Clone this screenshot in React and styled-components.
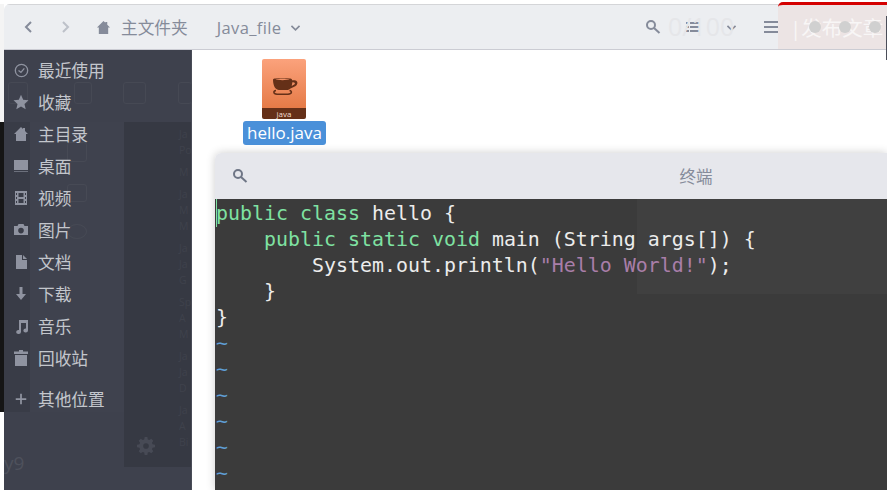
import React from 'react'
import styled, { createGlobalStyle } from 'styled-components'

const Global = createGlobalStyle`
html, body { margin:0; padding:0; background:#fff; overflow:hidden; }
`

const UI_FONT = `"Open Sans","Noto Sans","Noto Sans CJK SC",sans-serif`

const Desktop = styled.div`
position:relative;
width:887px;
height:490px;
overflow:hidden;
background:#fff;
font-family:${UI_FONT};
`
/* what shows through at the left of the file window */
const BackDark = styled.div`
position:absolute;
left:0;
top:122px;
width:4px;
height:290px;
background:#151515;
`
const BackGrey = styled.div`
position:absolute;
left:0;
top:4px;
width:4px;
height:118px;
background:#f4f4f4;
`
const FileWindow = styled.div`
position:absolute;
left:4px;
top:4px;
width:883px;
height:486px;
display:flex;
flex-direction:column;
border-radius:6px 6px 0 0;
overflow:hidden;
`
const HeaderBar = styled.div`
position:relative;
height:44px;
flex:none;
display:flex;
align-items:center;
background:#eceef1;
border-top:1px solid #d4d5d8;
border-bottom:1px solid #cbccd3;
color:#858b9a;
`
const NavBtn = styled.span`
display:flex;
width:${p => p.$w}px;
margin-left:${p => p.$ml || 0}px;
justify-content:center;
align-items:center;
opacity:${p => (p.$dim ? 0.45 : 1)};
`
const Crumb = styled.span`
display:flex;
align-items:center;
gap:${p => p.$gap}px;
font-size:${p => p.$size}px;
letter-spacing:${p => p.$track || 0}px;
margin-left:${p => p.$ml}px;
color:#858b9a;
`
const HeaderRight = styled.div`
position:relative;
margin-left:auto;
padding-right:108px;
display:flex;
align-items:center;
height:100%;
`
const CountGhost = styled.span`
position:absolute;
left:23px;
top:4px;
font-size:25px;
line-height:34px;
color:#e5e6e9;
`
const PublishGhost = styled.div`
position:absolute;
left:778px;
top:2px;
width:109px;
height:47px;
box-sizing:border-box;
background:#ece4e4;
border-top:3px solid #d40000;
border-radius:5px 0 0 0;
display:flex;
align-items:center;
padding-left:12px;
font-size:20.5px;
color:#f8f6f6;
white-space:nowrap;
`
const Dots = styled.div`
position:absolute;
left:31px;
top:16px;
display:flex;
gap:18px;
`
const Dot = styled.span`
width:12px;
height:12px;
border-radius:50%;
background:#d0d0d0;
`
const EdgeMark = styled.div`
position:absolute;
right:0;
top:16px;
width:1px;
height:44px;
background:#4b4e59;
`
const Body = styled.div`
flex:1;
display:flex;
min-height:0;
`
const Sidebar = styled.nav`
position:relative;
width:188px;
flex:none;
background:#3e414d;
border-right:1px solid #4a4d58;
box-sizing:border-box;
padding-top:4px;
display:flex;
flex-direction:column;
color:#c3c6cc;
`
const ShadeLeft = styled.div`
position:absolute;
left:0;
top:72px;
width:26px;
height:290px;
background:#393c47;
`
const ShadeStrip = styled.div`
position:absolute;
left:26px;
top:72px;
width:94px;
height:290px;
background:#3f424e;
color:#474a55;
display:flex;
flex-direction:column;
align-items:center;
gap:22px;
padding-top:20px;
box-sizing:border-box;
`
const ShadeRight = styled.div`
position:absolute;
left:120px;
top:72px;
right:0;
height:345px;
background:#363943;
color:#3f424c;
font-size:10.5px;
padding:4px 0 0 55px;
box-sizing:border-box;
display:flex;
flex-direction:column;
overflow:hidden;
`
const GhostLine = styled.span`
flex:none;
line-height:16px;
white-space:nowrap;
margin-top:${p => p.$gap || 0}px;
`
const Gear = styled.span`
position:absolute;
left:133px;
top:387px;
color:#474a55;
display:flex;
`
const GhostTiles = styled.div`
position:absolute;
left:0;
top:32px;
display:flex;
color:#464954;
`
const Tile = styled.span`
width:${p => p.$w || 20}px;
height:${p => p.$h || 20}px;
margin-left:${p => p.$ml || 0}px;
border:1px solid currentColor;
border-radius:${p => (p.$round ? '50%' : '3px')};
box-sizing:border-box;
`
const NavRow = styled.div`
position:relative;
height:32px;
display:flex;
align-items:center;
font-size:16.7px;
margin-top:${p => p.$gap || 0}px;
`
const NavIcon = styled.span`
width:34px;
flex:none;
display:flex;
justify-content:center;
color:#8f93a0;
`
const GhostLetters = styled.div`
position:absolute;
left:0;
bottom:14px;
font-size:19px;
color:#4e515c;
`
const Content = styled.main`
flex:1;
background:#fff;
padding:9px 0 0 51px;
`
const FileItem = styled.div`
display:inline-flex;
flex-direction:column;
align-items:center;
gap:2px;
`
const Label = styled.span`
background:#4a90d9;
color:#fff;
border-radius:3px;
padding:0 4px;
font-size:17px;
line-height:24px;
height:24px;
`
const Terminal = styled.section`
position:absolute;
left:215px;
top:153px;
width:672px;
height:337px;
display:flex;
flex-direction:column;
border-radius:6px 0 0 0;
box-shadow:0 0 10px rgba(0,0,0,.2);
overflow:hidden;
`
const TitleBar = styled.div`
position:relative;
height:46px;
flex:none;
background:#e6e7ec;
display:flex;
align-items:center;
justify-content:center;
color:#858b9a;
font-size:16.5px;
padding-left:290px;
box-sizing:border-box;
`
const SearchBtn = styled.span`
position:absolute;
left:17px;
top:15px;
display:flex;
color:#6f7686;
`
const Screen = styled.pre`
position:relative;
flex:1;
margin:0;
background:#3b3b3b;
color:#ececec;
padding:2px 0 0 1px;
font-family:"DejaVu Sans Mono","Liberation Mono",monospace;
font-size:19.93px;
line-height:26px;
`
const GhostArea = styled.div`
position:absolute;
left:422px;
top:0;
right:0;
height:95px;
background:#404040;
`
const Line = styled.div`
position:relative;
height:26px;
white-space:pre;
`
const Kw = styled.span`
color:#7fe2a2;
`
const Str = styled.span`
color:#a97ea9;
`
const Tilde = styled(Line)`
color:#5f9fd6;
`
const Cursor = styled.i`
position:absolute;
left:0;
top:-2px;
width:1px;
height:28px;
background:#7fe2a2;
`

const Chevron = ({ dir = 'left', size = 16 }) => {
  const d = { left: 'M10 3 5 8l5 5', right: 'M6 3l5 5-5 5', down: 'M3 6l5 5 5-5' }[dir]
  return (
    <svg width={size} height={size} viewBox="0 0 16 16" fill="none" stroke="currentColor" strokeWidth="2">
      <path d={d} />
    </svg>
  )
}
const Glyph = ({ size = 16, children, stroke }) => (
  <svg
    width={size}
    height={size}
    viewBox="0 0 16 16"
    fill={stroke ? 'none' : 'currentColor'}
    stroke={stroke ? 'currentColor' : 'none'}
    strokeWidth={stroke || 0}
  >
    {children}
  </svg>
)
const HomeIcon = ({ size }) => (
  <Glyph size={size}>
    <path d="M8 1 1 8h2v7h10V8h2l-3-3V2h-2v1z" />
  </Glyph>
)
const SearchIcon = () => (
  <Glyph size={16} stroke={2}>
    <circle cx="6" cy="6" r="4" />
    <path d="M9 9l5.500 5" />
  </Glyph>
)
const icons = {
  clock: (
    <Glyph size={15} stroke={1.4}>
      <circle cx="8" cy="8" r="6.600" />
      <path d="M4.800 8 7.400 10 11 5.800" />
    </Glyph>
  ),
  star: (
    <Glyph>
      <path d="M8 .8l2.200 5 5.300.5-4 3.600 1.200 5.300L8 12.400l-4.700 2.800 1.200-5.300-4-3.600 5.300-.5z" />
    </Glyph>
  ),
  home: <HomeIcon size={16} />,
  desk: (
    <Glyph>
      <path d="M1 2h14v10H1z" />
      <path d="M1 13h14v1H1z" opacity=".6" />
    </Glyph>
  ),
  film: (
    <Glyph>
      <path fillRule="evenodd" d="M2 1h12v14H2zM3 3v2h1V3zm0 4v2h1V7zm0 4v2h1v-2zm9-8v2h1V3zm0 4v2h1V7zm0 4v2h1v-2zM5.500 3v4h5V3zm0 6v4h5V9z" />
    </Glyph>
  ),
  camera: (
    <Glyph>
      <path fillRule="evenodd" d="M1 4h3.500l1-2h5l1 2H15v9H1zm7 1.800a2.800 2.800 0 1 0 0 5.600 2.800 2.800 0 0 0 0-5.600z" />
    </Glyph>
  ),
  doc: (
    <Glyph>
      <path d="M3 1h6v5h5v9H3zM10 1l4 4h-4z" />
    </Glyph>
  ),
  down: (
    <Glyph>
      <path d="M6.500 1h3v7H13l-5 6-5-6h3.500z" />
    </Glyph>
  ),
  music: (
    <Glyph>
      <path d="M6 2h9v10.500a2.300 2 0 1 1-2-2V5H8v9a2.400 2 0 1 1-2-2z" />
    </Glyph>
  ),
  trash: (
    <Glyph>
      <path d="M6 0h4v1.500h5V4H1V1.500h5zM2 5h12v11H2z" />
    </Glyph>
  ),
  plus: (
    <Glyph size={14} stroke={2}>
      <path d="M8 2v12M2 8h12" />
    </Glyph>
  ),
}

const places = [
  ['clock', '最近使用'],
  ['star', '收藏'],
  ['home', '主目录'],
  ['desk', '桌面'],
  ['film', '视频'],
  ['camera', '图片'],
  ['doc', '文档'],
  ['down', '下载'],
  ['music', '音乐'],
  ['trash', '回收站'],
]

// faint list of the window behind, groups of three lines
const ghostGroups = [
  ['Ja', 'Po'],
  ['M'],
  ['Ja', 'M', 'M'],
  ['Ja', 'Ja', 'G'],
  ['Sp', 'A', 'M'],
  ['Ja', 'Ja', 'D'],
  ['Ja', 'A', 'Bi'],
]

const JavaIcon = () => (
  <svg width="44" height="60" viewBox="0 0 44 60">
    <defs>
      <linearGradient id="jv" x1="0" y1="0" x2="0" y2="1">
        <stop offset="0" stopColor="#fba27c" />
        <stop offset="1" stopColor="#e57a46" />
      </linearGradient>
    </defs>
    <path d="M2 0h40a2 2 0 0 1 2 2v48H0V2a2 2 0 0 1 2-2z" fill="url(#jv)" />
    <path d="M0 49h44v9a2 2 0 0 1-2 2H2a2 2 0 0 1-2-2z" fill="#653018" />
    <path
      fill="#653018"
      fillRule="evenodd"
      d="M11 20.500c0-2 19-2 19 0v.7h2.500c3.500 0 4 4.300.8 6l-4.800 2.300c-1 .8-2 1.500-3.500 1.500h-8c-3 0-6-3.500-6-10.500zm2.500-.2c2 1.100 12 1.100 14 0-2-1-12-1-14 0zm16.900 3-.7 3.600 2.500-1.300c1.300-.8 1-2.500-1.800-2.300z"
    />
    <path
      fill="none"
      stroke="#653018"
      strokeWidth="1.500"
      d="M14 31.500c-3 .5-3 3.500 1 3.700h11c4-.2 4.500-3.200 1.500-3.700"
    />
    <text x="22" y="57.500" textAnchor="middle" fontSize="8" fontFamily="Open Sans, sans-serif" fill="#f1ddd2">
      java
    </text>
  </svg>
)

function App() {
  return (
    <>
      <Global />
      <Desktop>
        <BackGrey />
        <BackDark />
        <FileWindow>
          <HeaderBar>
            <NavBtn $w={22} $ml={14}>
              <Chevron dir="left" />
            </NavBtn>
            <NavBtn $w={22} $ml={14} $dim>
              <Chevron dir="right" />
            </NavBtn>
            <Crumb $ml={20} $gap={10} $size={16.7}>
              <HomeIcon size={15} />
              主文件夹
            </Crumb>
            <Crumb $ml={29} $gap={8} $size={16.5} $track={0.35}>
              Java_file
              <Chevron dir="down" size={13} />
            </Crumb>
            <HeaderRight>
              <CountGhost>0/100</CountGhost>
              <NavBtn $w={16}>
                <SearchIcon />
              </NavBtn>
              <NavBtn $w={16} $ml={24}>
                <Glyph>
                  <path d="M1 3h3v2H1zm4 0h10v2H5zM1 7h3v2H1zm4 0h10v2H5zm-4 4h3v2H1zm4 0h10v2H5z" />
                </Glyph>
              </NavBtn>
              <NavBtn $w={14} $ml={23}>
                <Chevron dir="down" size={13} />
              </NavBtn>
              <NavBtn $w={16} $ml={25}>
                <Glyph>
                  <path d="M1 2h14v2H1zm0 5h14v2H1zm0 5h14v2H1z" />
                </Glyph>
              </NavBtn>
            </HeaderRight>
          </HeaderBar>
          <Body>
            <Sidebar>
              <ShadeLeft />
              <ShadeStrip>
                <Tile $w={20} $h={20} />
                <Tile $w={20} $h={18} />
                <Tile $w={20} $h={15} $round />
              </ShadeStrip>
              <ShadeRight>
                {ghostGroups.map((group, i) =>
                  group.map((text, j) => (
                    <GhostLine key={`${i}-${j}`} $gap={j === 0 && i > 0 ? 6 : 0}>
                      {text}
                    </GhostLine>
                  )),
                )}
              </ShadeRight>
              <GhostTiles>
                <Tile $ml={4} $w={20} $h={22} />
                <Tile $ml={46} $w={18} $h={22} />
                <Tile $ml={31} $w={23} $h={22} />
                <Tile $ml={32} $w={14} $h={22} />
              </GhostTiles>
              <Gear>
                <Glyph size={18}>
                  <path
                    fillRule="evenodd"
                    d="M6.800 0h2.400l.4 2.200 1.300.5L12.700 1.500l1.800 1.800-1.200 1.800.5 1.300L16 6.800v2.400l-2.200.4-.5 1.300 1.200 1.800-1.800 1.800-1.800-1.200-1.300.5L9.200 16H6.800l-.4-2.200-1.300-.5-1.800 1.200-1.800-1.800 1.200-1.800-.5-1.300L0 9.200V6.800l2.200-.4.5-1.300-1.200-1.800 1.800-1.800 1.800 1.200 1.300-.5zM8 5.500a2.500 2.500 0 1 0 0 5 2.500 2.500 0 0 0 0-5z"
                  />
                </Glyph>
              </Gear>
              {places.map(([icon, name]) => (
                <NavRow key={name}>
                  <NavIcon>{icons[icon]}</NavIcon>
                  {name}
                </NavRow>
              ))}
              <NavRow $gap={9}>
                <NavIcon>{icons.plus}</NavIcon>
                其他位置
              </NavRow>
              <GhostLetters>y9</GhostLetters>
            </Sidebar>
            <Content>
              <FileItem>
                <JavaIcon />
                <Label>hello.java</Label>
              </FileItem>
            </Content>
          </Body>
        </FileWindow>
        <PublishGhost>
          |发布文章
          <Dots>
            <Dot />
            <Dot />
            <Dot />
          </Dots>
        </PublishGhost>
        <EdgeMark />
        <Terminal>
          <TitleBar>
            <SearchBtn>
              <SearchIcon />
            </SearchBtn>
            终端
          </TitleBar>
          <Screen>
            <GhostArea />
            <Line>
              <Cursor />
              <Kw>public class</Kw> hello {'{'}
            </Line>
            <Line>
              {'    '}
              <Kw>public static void</Kw> main (String args[]) {'{'}
            </Line>
            <Line>
              {'        '}System.out.println(<Str>"Hello World!"</Str>);
            </Line>
            <Line>{'    }'}</Line>
            <Line>{'}'}</Line>
            {[0, 1, 2, 3, 4, 5].map(i => (
              <Tilde key={i}>~</Tilde>
            ))}
          </Screen>
        </Terminal>
      </Desktop>
    </>
  )
}

export default App
